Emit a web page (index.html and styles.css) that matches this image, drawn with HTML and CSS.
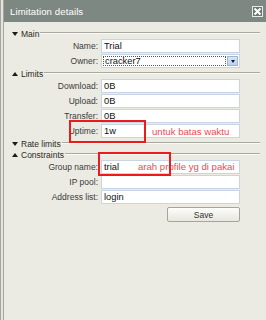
FILE: index.html
```html
<!DOCTYPE html>
<html>
<head>
<meta charset="utf-8">
<link rel="stylesheet" href="styles.css">
</head>
<body>
<div class="screen">
	<div class="edge"></div>
	<div class="dialog">
		<div class="titlebar">
			<span class="title">Limitation details</span>
			<span class="close"><svg width="9" height="9" viewBox="0 0 9 9"><path d="M1.5 1.5 L7.5 7.5 M7.5 1.5 L1.5 7.5" stroke="#fff" stroke-width="2"/></svg></span>
		</div>
		<div class="content">
			<div class="section">
				<div class="head"><span class="arrow down"></span><span class="name">Main</span><span class="rule"></span></div>
				<div class="rows">
					<label>Name:</label><div class="field">Trial</div>
					<label>Owner:</label><div class="field select"><span class="value">cracker7</span><span class="drop"><span class="arrow down small"></span></span></div>
				</div>
			</div>
			<div class="section">
				<div class="head"><span class="arrow up"></span><span class="name">Limits</span><span class="rule"></span></div>
				<div class="rows">
					<label>Download:</label><div class="field">0B</div>
					<label>Upload:</label><div class="field">0B</div>
					<label>Transfer:</label><div class="field">0B</div>
					<label>Uptime:</label><div class="field">1w</div>
				</div>
			</div>
			<div class="section">
				<div class="head"><span class="arrow down"></span><span class="name">Rate limits</span><span class="rule"></span></div>
			</div>
			<div class="section">
				<div class="head"><span class="arrow up"></span><span class="name">Constraints</span><span class="rule"></span></div>
				<div class="rows">
					<label>Group name:</label><div class="field">trial</div>
					<label>IP pool:</label><div class="field"></div>
					<label>Address list:</label><div class="field">login</div>
				</div>
			</div>
			<div class="actions"><button class="save">Save</button></div>
		</div>
	</div>
	<div class="mark mark-uptime"></div>
	<div class="note note-uptime">untuk batas waktu</div>
	<div class="note note-group">arah profile yg di pakai</div>
	<div class="mark mark-group"></div>
</div>
</body>
</html>
```

FILE: styles.css
```css
html,body{margin:0;height:100%}
body{background:#ebebe3;font-family:"Liberation Sans",Arial,sans-serif;color:#333}
.screen{position:relative;display:flex;width:266px;height:320px;overflow:hidden}
.edge{width:4px;border-left:4px double #a3a5a1;box-sizing:border-box;background:#e4e4dc}
.dialog{flex:1;background:#ebebe3}
.titlebar{
	height:22px;background:#7e8883;
	display:flex;align-items:center;justify-content:space-between;
	padding:0 3px 0 6px;
}
.title{color:#fff;font-size:9.6px;letter-spacing:0.1px}
.close{
	width:11px;height:11px;box-sizing:border-box;
	border:1px solid #e8ece9;background:#6c7672;
	display:flex;align-items:center;justify-content:center;
}
.close svg{display:block}
.content{padding-top:6px}
.head{
	height:11px;display:flex;align-items:center;
	padding-left:8px;font-size:8.5px;color:#2a2a22;
}
.head .name{margin-left:3px}
.head .rule{
	flex:1;height:0;margin:-2px 6px 0 1px;
	border-top:1px solid #a9a9a2;border-bottom:1px solid #fafaf6;
}
.arrow{width:0;height:0;border-left:3px solid transparent;border-right:3px solid transparent}
.arrow.down{border-top:4px solid #1c1c1c}
.arrow.up{border-bottom:4px solid #1c1c1c}
.arrow.small{border-left-width:2.5px;border-right-width:2.5px;border-top-width:3px}
.rows{
	display:grid;grid-template-columns:94px 139px;
	column-gap:3px;row-gap:1px;
}
.rows label{font-size:8.5px;line-height:14px;text-align:right;color:#3a3a3a}
.field{
	height:14px;box-sizing:border-box;
	background:#fff;border:1px solid #c9d5e2;
	font-size:9.3px;line-height:12px;padding-left:2px;color:#111;
}
.select{display:flex;padding:1px;gap:1px}
.select .value{
	flex:1;outline:1px dotted #555;outline-offset:-1px;
	line-height:10px;padding-left:2px;
}
.select .drop{
	width:11px;background:linear-gradient(#d4e6fa,#b7d3f2);
	border:1px solid #9bb5d2;box-sizing:border-box;
	display:flex;align-items:center;justify-content:center;
}
.actions{width:236px;display:flex;justify-content:flex-end;margin-top:3px}
.save{
	width:73px;height:15px;padding:0;
	font-family:"Liberation Sans",Arial,sans-serif;font-size:8.5px;color:#333;
	background:linear-gradient(#fdfdfb,#e7e7df);
	border:1px solid #a5a59d;border-radius:2px;
}
.mark{position:absolute;border:2px solid #ec1a1a;box-sizing:border-box}
.mark-uptime{left:69px;top:120px;width:77px;height:23px}
.mark-group{left:98px;top:152px;width:73px;height:24px}
.note{position:absolute;font-size:9.6px;line-height:12px;color:#f04a55;white-space:nowrap}
.note-uptime{left:152px;top:126px}
.note-group{left:138px;top:161px}
```
